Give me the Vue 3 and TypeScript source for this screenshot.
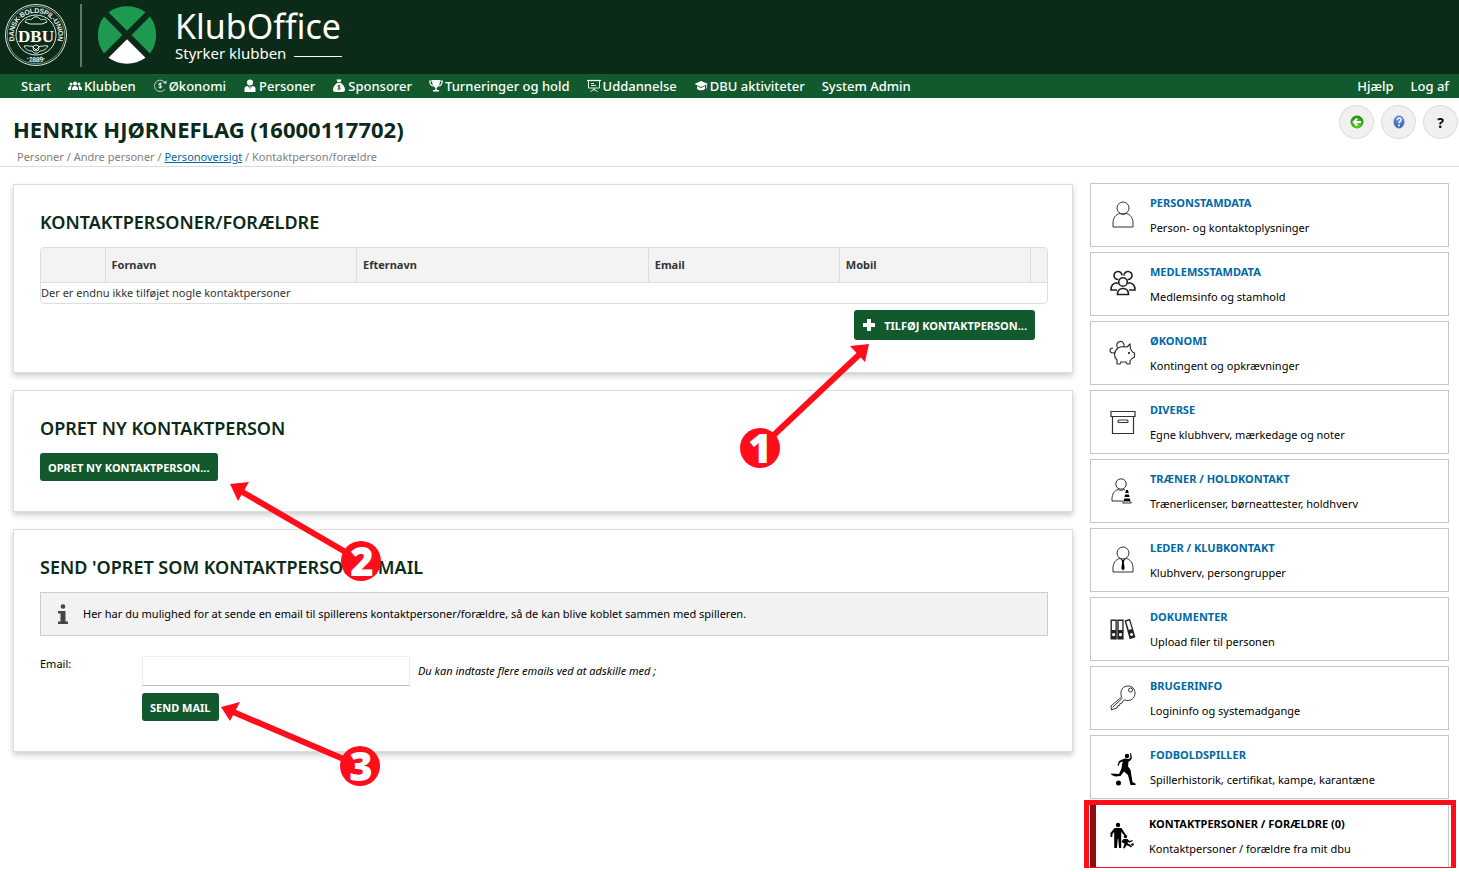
<script setup lang="ts">
import { ref } from 'vue'

interface NavItem { label: string; icon?: string }
interface SideItem { title: string; text: string; icon: string; active?: boolean }

const email = ref('')

const nav: NavItem[] = [
  { label: 'Start' },
  {
    label: 'Klubben',
    icon: '<circle cx="7" cy="4.500" r="2"/><path d="M4 11c0-3 1-4 3-4s3 1 3 4z"/><circle cx="3" cy="5" r="1.500"/><circle cx="11" cy="5" r="1.500"/><path d="M0 11c0-3 1-4 3-4l.6.300C3.200 8 3 9 3 11zM14 11c0-3-1-4-3-4l-.6.300c.4.700.6 1.700.6 3.700z"/>'
  },
  {
    label: 'Økonomi',
    icon: '<path d="M11 2.600A5.700 5.700 0 1 0 12 10" fill="none" stroke="currentColor" stroke-width=".9" opacity=".8"/><path d="M9.500 3.800 13.600 1.400 13.300 5z" opacity=".8"/><path d="M8.600 4.800C7.500 4 5.600 4.400 5.700 5.500c.1 1.300 3 .7 3 2.200 0 1.100-2.100 1.300-3.200.5M7.200 3.600v5.900" fill="none" stroke="currentColor" stroke-width="1"/>'
  },
  {
    label: 'Personer',
    icon: '<circle cx="7" cy="3.500" r="3"/><path d="M1.500 13V9.500C1.500 8 3 7 5 7l2 4 2-4c2 0 3.500 1 3.500 2.500V13z"/><path d="M6.500 7.200h1L7.700 10 7 11l-.7-1z"/>'
  },
  {
    label: 'Sponsorer',
    icon: '<path d="M4.500.5h5L8.500 3h-3zM5.300 3.700h3.400C11 5.300 13 8 13 10.500 13 12.300 12 13 10.500 13h-7C2 13 1 12.300 1 10.500 1 8 3 5.300 5.300 3.700z"/><path d="M8.500 7C7.500 6.200 5.800 6.500 5.900 7.500c.1 1 2.500.7 2.400 1.900 0 1-1.800 1.200-2.800.4M7 5.700v5.600" fill="none" stroke="#125a2d" stroke-width=".9"/>'
  },
  {
    label: 'Turneringer og hold',
    icon: '<path d="M3 1h8c0 4-1 7-3.300 7.700V11H10v1.500H4V11h2.300V8.700C4 8 3 5 3 1z"/><path d="M3 2H.8c0 3 1.200 4.600 3.400 5M11 2h2.200c0 3-1.200 4.600-3.400 5" fill="none" stroke="currentColor" stroke-width="1.200"/>'
  },
  {
    label: 'Uddannelse',
    icon: '<g fill="none" stroke="currentColor"><path d="M0 1.500h14" stroke-width="1.200"/><path d="M1.500 2v7h11V2M4 4.500h3M4 6.500h5M7 9v2M3.500 12.500 7 10.500l3.500 2" stroke-width=".9"/></g>'
  },
  {
    label: 'DBU aktiviteter',
    icon: '<path d="M7 2 14 5 7 8 .5 5z"/><path d="M3 7v2.700C4.500 11.700 9.500 11.700 11 9.700V7L7 8.900z"/><path d="M12.300 5.500h.8v4h-.8z"/>'
  },
  { label: 'System Admin' }
]

const side: SideItem[] = [
  {
    title: 'Personstamdata',
    text: 'Person- og kontaktoplysninger',
    icon: '<g fill="none" stroke="#333"><circle cx="14" cy="7" r="6"/><path d="M4 26V22c0-5 3-9 7-9.500 2 1 4 1 6 0 4 .5 7 4.500 7 9.500v4z"/></g>'
  },
  {
    title: 'Medlemsstamdata',
    text: 'Medlemsinfo og stamhold',
    icon: '<g fill="none" stroke="#222" stroke-width="1.600"><circle cx="14" cy="12" r="4.300"/><path d="M8.500 24.500c0-4 2-6 5.500-6s5.500 2 5.500 6zM9.500 9.500A4 4 0 1 1 13 5.500M18.500 9.500A4 4 0 1 0 15 5.500M8 12.800c-4 .2-6 2.700-6 7.200h6M20 12.800c4 .2 6 2.700 6 7.200h-6M8 12.800l1 1M20 12.800l-1 1"/></g>'
  },
  {
    title: 'Økonomi',
    text: 'Kontingent og opkrævninger',
    icon: '<g fill="none" stroke="#333" stroke-width="1.200" stroke-linejoin="round"><path d="M9 9c3-2 6-1.600 9-1l3-3 .5 5 2 3 2 1v4l-2.500 1.500-2 2.500v3h-3l-1-2h-5l-1 2H8v-4c-3-3-4-8 1-12zM4 14c-4 0-4-5 0-5M4 14l1.500-.5M8.500 8.500A3.700 3.700 0 1 1 15 7"/></g><circle cx="20" cy="14" r="1"/>'
  },
  {
    title: 'Diverse',
    text: 'Egne klubhverv, mærkedage og noter',
    icon: '<g fill="none" stroke="#333" stroke-width="1.200"><path d="M2 3.500h24v5H2zM3.500 8.500h21v17h-21z"/><rect x="9" y="12" width="10" height="2.500" rx="1"/></g>'
  },
  {
    title: 'Træner / Holdkontakt',
    text: 'Trænerlicenser, børneattester, holdhverv',
    icon: '<g fill="none" stroke="#333"><circle cx="12" cy="7" r="5.200"/><path d="M14 24H3v-2c0-5 2.500-8.500 6-9.500 2 1 4 1 6 0l1 .5"/><path d="M13.500 26h9l-2-2h-5z"/></g><path d="M17 13h2l.7 3h-3.400zM16 17.500h4l.5 2.500h-5zM15.200 21.500h5.600l.6 2.500h-6.800z"/>'
  },
  {
    title: 'Leder / Klubkontakt',
    text: 'Klubhverv, persongrupper',
    icon: '<g fill="none" stroke="#333"><circle cx="14" cy="7" r="6"/><path d="M4 26V22c0-5 3-9 7-9.500l3 2 3-2c4 .5 7 4.500 7 9.500v4z"/></g><path d="M12.500 14h3l-.7 2 .9 6.500L14 24.500l-1.700-2 .9-6.500z"/>'
  },
  {
    title: 'Dokumenter',
    text: 'Upload filer til personen',
    icon: '<g fill="#222" fill-rule="evenodd"><path d="M1.500 4.500h6.300v20H1.500zM2.900 6v9h3.600V6zM4.600 18a1.600 1.600 0 1 0 .1 0z"/><path d="M8.300 4.500h6.300v20H8.300zM9.700 6v9h3.600V6zM11.400 18a1.600 1.600 0 1 0 .1 0z"/><path d="M15.500 5.500l5.500-1.700 5.500 18.500-5.800 2zM17.200 6.500l2.600 8.500 3-1-2.600-8.600zM22.500 18a1.500 1.500 0 1 0 .1 0z"/></g>'
  },
  {
    title: 'Brugerinfo',
    text: 'Logininfo og systemadgange',
    icon: '<g fill="none" stroke="#333" stroke-linejoin="round"><path d="M12.500 13C10.500 6 14 2 19 2c4 0 7 3 7 7 0 5-4 9-10.500 7L14 17l-1 2-2 .5-.5 2-2 .5-.5 2-2 .5-3.500 1.500-.5-4z"/><circle cx="21.500" cy="6" r="2"/><path d="M13.500 14 3.500 23.500"/></g>'
  },
  {
    title: 'Fodboldspiller',
    text: 'Spillerhistorik, certifikat, kampe, karantæne',
    icon: '<circle cx="18" cy="3" r="2.200"/><path d="M15.500 5.500l4.500.5 1.500-1.500-.5-4 1-.5 1 5-2 3-1.500.5-.5 5c2 2 3 3.500 3 6.500l1.500 9 3 1.500v1.500h-5l-2.500-10-4-3.500-3.500 4.500-5 .5-4-1.500-.5-1.500 8 .5 2.500-5.500c.5-3 .5-5 1.500-7L11 9.500 9.500 13 8.500 12.500 10 8z"/><circle cx="9.500" cy="30" r="2.500"/>'
  },
  {
    title: 'Kontaktpersoner / Forældre (0)',
    text: 'Kontaktpersoner / forældre fra mit dbu',
    icon: '<circle cx="10" cy="3" r="2.200"/><path d="M6.500 6h7l2.500 4 2 3-1 1-3-3-.8-1.500V26H11l-.7-9h-.6L9 26H6.200V10L4.500 12 4.200 15H2.500V11z"/><circle cx="17.500" cy="14.500" r="1.700"/><path d="M15.500 17h4l2 2 3-1 .3 1-3.500 1.800-1.600-1v1.700l2.300 1 2 2-1 1-2.500-1.800-2-.5-2 3.300-1.300-.6 1.300-4.400-1.500-.5-1.500-1.500z"/><circle cx="24.500" cy="22.500" r="1.300"/>',
    active: true
  }
]
</script>

<template>
  <div class="page">
    <header class="brand">
      <svg class="crest" viewBox="0 0 64 64" role="img" aria-label="DBU">
        <g fill="none" stroke="#dfe8e1">
          <circle cx="32" cy="32" r="30.500" stroke-width="1" />
          <circle cx="32" cy="32" r="28.800" stroke-width=".5" />
          <circle cx="32" cy="32" r="20" stroke-width="1" />
          <path d="M21 19c2-5 5-1 7-3 2-3 6-3 8 0 2 2 5-2 7 3l-5 2H26zM20 43c4-1 6 1 8 0l4 4 4-4c2 1 4-1 8 0-2 4-6 5-8 5-2 3-6 3-8 0-3 0-6-1-8-5z" stroke-width="1" />
          <circle cx="32" cy="45" r="3" stroke-width="1" />
        </g>
        <path id="crest-top" d="M12.500 46.500A24.200 24.200 0 1 1 51.500 46.500" fill="none" />
        <path id="crest-bottom" d="M16 54A27 27 0 0 0 48 54" fill="none" />
        <text class="crest-ring" dy="2"><textPath href="#crest-top" startOffset="50%" text-anchor="middle">DANSK·BOLDSPIL-UNION</textPath></text>
        <text class="crest-ring"><textPath href="#crest-bottom" startOffset="50%" text-anchor="middle">·1889·</textPath></text>
        <text class="crest-mark" x="32" y="38.500" text-anchor="middle">DBU</text>
      </svg>
      <span class="divider"></span>
      <svg class="ball" viewBox="0 0 64 64" aria-hidden="true">
        <g fill="#1e9a50">
          <path d="M13.500 9.200A32 32 0 0 1 50.500 9.200L32 27.700z" />
          <path d="M9 13.500A31 31 0 0 0 9 50.500L27.500 32z" />
          <path d="M55 13.500A31 31 0 0 1 55 50.500L36.500 32z" />
        </g>
        <path d="M13.500 54.800A32 32 0 0 0 50.500 54.800L32 36.300z" fill="#fff" />
      </svg>
      <div class="wordmark">
        <span class="name">KlubOffice</span>
        <span class="slogan">Styrker klubben<i></i></span>
      </div>
    </header>

    <nav class="menu">
      <a v-for="item in nav" :key="item.label" href="#">
        <svg v-if="item.icon" viewBox="0 0 14 14" fill="currentColor" aria-hidden="true" v-html="item.icon"></svg>{{ item.label }}
      </a>
      <a class="push" href="#">Hjælp</a>
      <a href="#">Log af</a>
    </nav>

    <section class="heading">
      <div>
        <h1>HENRIK HJØRNEFLAG (16000117702)</h1>
        <p class="crumbs">Personer / Andre personer / <a href="#">Personoversigt</a> / Kontaktperson/forældre</p>
      </div>
      <div class="tools">
        <button type="button" aria-label="Tilbage">
          <svg viewBox="0 0 16 16">
            <defs>
              <radialGradient id="green" cx=".5" cy=".7" r=".6"><stop offset="0" stop-color="#6ee02c" /><stop offset="1" stop-color="#22920e" /></radialGradient>
              <radialGradient id="blue" cx=".5" cy=".4" r=".6"><stop offset="0" stop-color="#6f9be8" /><stop offset="1" stop-color="#2c55ad" /></radialGradient>
            </defs>
            <circle cx="8" cy="8" r="6.500" fill="url(#green)" />
            <path d="M12 8H5M8.200 4.500 4.700 8l3.500 3.500" fill="none" stroke="#fff" stroke-width="2" />
          </svg>
        </button>
        <button type="button" aria-label="Information">
          <svg viewBox="0 0 16 16">
            <ellipse cx="8" cy="8" rx="5.500" ry="6.500" fill="url(#blue)" stroke="#bcc8dc" />
            <path d="M6 6.200c0-3 4.500-2.700 4.200-.2C10 7.400 8 7.600 8 9.300" fill="none" stroke="#fff" stroke-width="1.500" />
            <circle cx="8" cy="11.500" r="1" fill="#fff" />
          </svg>
        </button>
        <button type="button">?</button>
      </div>
    </section>

    <main class="layout">
      <div class="cards">
        <section class="card">
          <h2>KONTAKTPERSONER/FORÆLDRE</h2>
          <div class="grid-frame">
            <table>
              <colgroup><col class="c-tool" /><col class="c-first" /><col class="c-last" /><col class="c-mail" /><col class="c-mail" /><col /></colgroup>
              <thead>
                <tr><th></th><th>Fornavn</th><th>Efternavn</th><th>Email</th><th>Mobil</th><th></th></tr>
              </thead>
              <tbody>
                <tr><td colspan="6">Der er endnu ikke tilføjet nogle kontaktpersoner</td></tr>
              </tbody>
            </table>
          </div>
          <div class="actions">
            <div class="anchor">
              <button class="btn add" type="button">
                <svg viewBox="0 0 14 14" aria-hidden="true"><path d="M5 1h4v4h4v4H9v4H5V9H1V5h4z" fill="#fff" /></svg>TILFØJ KONTAKTPERSON...
              </button>
              <svg class="note" width="1" height="1">
                <path d="M-94 138 9 41" />
                <path class="head" d="M15 34-4 36 11 52z" />
                <circle cx="-94" cy="138" r="20" />
                <text x="-94" y="153">1</text>
              </svg>
            </div>
          </div>
        </section>

        <section class="card">
          <h2>OPRET NY KONTAKTPERSON</h2>
          <div class="anchor">
            <button class="btn" type="button">OPRET NY KONTAKTPERSON...</button>
            <svg class="note" width="1" height="1">
              <path d="M321 108 199 37" />
              <path class="head" d="M190 31 209 29 198 48z" />
              <circle cx="321" cy="108" r="20" />
              <text x="322" y="123">2</text>
            </svg>
          </div>
        </section>

        <section class="card">
          <h2>SEND 'OPRET SOM KONTAKTPERSON'-EMAIL</h2>
          <p class="info">
            <svg viewBox="0 0 12 20" aria-hidden="true"><circle cx="6" cy="2.500" r="2.300" /><path d="M1 7h7.500v10.500H11V20H1v-2.500h2.500v-8H1z" /></svg>
            Her har du mulighed for at sende en email til spillerens kontaktpersoner/forældre, så de kan blive koblet sammen med spilleren.
          </p>
          <form class="mail" @submit.prevent>
            <label for="email">Email:</label>
            <div class="field">
              <input id="email" v-model="email" type="text" />
              <em>Du kan indtaste flere emails ved at adskille med ;</em>
            </div>
            <div class="anchor second">
              <button class="btn" type="submit">SEND MAIL</button>
              <svg class="note" width="1" height="1">
                <path d="M218 73 89 18" />
                <path class="head" d="M79 14 98 9 88 28z" />
                <circle cx="218" cy="73" r="20" />
                <text x="219" y="88">3</text>
              </svg>
            </div>
          </form>
        </section>
      </div>

      <aside class="side">
        <a v-for="item in side" :key="item.title" href="#" :class="{ active: item.active }">
          <svg viewBox="0 0 28 28" aria-hidden="true" v-html="item.icon"></svg>
          <span>
            <strong>{{ item.title.toUpperCase() }}</strong>
            <small>{{ item.text }}</small>
          </span>
        </a>
      </aside>
    </main>
  </div>
</template>

<style>
body {
  margin: 0;
  background: #fff;
}
</style>

<style scoped>
.page {
  font-family: "Noto Sans", "Open Sans", sans-serif;
  font-size: 11px;
  line-height: 16px;
  color: #000;
}
.page * {
  box-sizing: border-box;
}
.brand {
  display: flex;
  align-items: center;
  height: 74px;
  padding: 0 4px 4px;
  background: #0b2a17;
  color: #fff;
}
.crest {
  width: 64px;
  height: 64px;
}
.crest-ring {
  fill: #e6eee8;
  font: 700 7px "Liberation Sans", sans-serif;
}
.crest-mark {
  fill: #fff;
  font: 700 17px "Liberation Serif", serif;
}
.divider {
  width: 2px;
  height: 63px;
  margin: 0 13px 0 12px;
  background: #5f7767;
}
.ball {
  width: 64px;
  height: 64px;
}
.wordmark {
  display: flex;
  flex-direction: column;
  padding-left: 16px;
}
.name {
  font-size: 34px;
  line-height: 36px;
}
.slogan {
  display: flex;
  gap: 8px;
  font-size: 15px;
  line-height: 18px;
}
.slogan i {
  width: 48px;
  height: 13px;
  border-bottom: 1px solid #fff;
}
.menu {
  display: flex;
  align-items: center;
  height: 24px;
  padding: 0 10px 0 21px;
  gap: 17px;
  background: #125a2d;
  font-size: 13px;
  font-weight: 500;
}
.menu a {
  display: flex;
  align-items: center;
  gap: 2px;
  color: #fff;
  text-decoration: none;
  white-space: nowrap;
}
.menu svg {
  width: 14px;
  height: 14px;
}
.push {
  margin-left: auto;
}
.heading {
  display: flex;
  justify-content: space-between;
  height: 69px;
  padding: 7px 1px 0 13px;
  border-bottom: 1px solid #ddd;
}
h1 {
  margin: 8px 0;
  font-size: 22px;
  line-height: 32px;
  color: #0b2a17;
}
h1 + p {
  margin: -4px 0 0;
}
.crumbs {
  padding-left: 4px;
  color: #808080;
}
.crumbs a {
  color: #0068a5;
}
.tools {
  display: flex;
  gap: 7px;
}
.tools button {
  display: flex;
  align-items: center;
  justify-content: center;
  width: 35px;
  height: 34px;
  padding: 0;
  border: 1px solid #ddd;
  border-radius: 50%;
  background: #f0f0f0;
  font: 700 14px "Noto Sans", sans-serif;
  color: #000;
}
.tools svg {
  width: 16px;
  height: 16px;
}
.layout {
  display: grid;
  grid-template-columns: minmax(0, 1fr) 359px;
  gap: 17px;
  padding: 16px 10px 0 13px;
}
.cards {
  display: flex;
  flex-direction: column;
  gap: 17px;
  padding-top: 1px;
}
.card {
  padding: 26px 24px 30px 26px;
  border: 1px solid #ddd;
  background: #fff;
  box-shadow: 0 3px 6px rgba(0, 0, 0, 0.2);
}
h2 {
  margin: 0 0 14px;
  font-size: 18px;
  font-weight: 600;
  line-height: 22px;
  color: #0b2a17;
}
.grid-frame {
  overflow: hidden;
  border: 1px solid #ddd;
  border-radius: 4px;
}
table {
  width: 100%;
  table-layout: fixed;
  border-collapse: collapse;
  color: #333;
}
.c-tool {
  width: 64px;
}
.c-first {
  width: 25%;
}
.c-last {
  width: 29%;
}
.c-mail {
  width: 19%;
}
th {
  height: 34px;
  padding: 0 6px;
  border-right: 1px solid #ddd;
  border-bottom: 1px solid #ddd;
  background: #f3f3f3;
  text-align: left;
}
th:last-child {
  border-right: 0;
}
td {
  height: 21px;
  padding: 0;
}
.actions {
  display: flex;
  justify-content: flex-end;
  padding: 6px 13px 2px 0;
}
.anchor {
  position: relative;
  display: flex;
}
.btn {
  display: flex;
  align-items: center;
  height: 28px;
  padding: 0 8px;
  border: 0;
  border-radius: 3px;
  background: #125a2d;
  color: #fff;
  font: 700 11px "Noto Sans", sans-serif;
}
.add {
  height: 30px;
  gap: 8px;
}
.add svg {
  width: 14px;
  height: 14px;
}
.note {
  position: absolute;
  z-index: 2;
  top: 0;
  left: 0;
  overflow: visible;
  pointer-events: none;
}
.note path {
  fill: none;
  stroke: #ff0d1b;
  stroke-width: 6;
}
.note .head {
  fill: #ff0d1b;
  stroke-width: 0;
}
.note circle {
  fill: #ff0d1b;
}
.note text {
  fill: #fff;
  font: 800 40px "Open Sans", sans-serif;
  text-anchor: middle;
}
.info {
  display: flex;
  align-items: center;
  height: 44px;
  margin: 0 0 20px;
  padding: 0 16px;
  gap: 14px;
  border: 1px solid #ccc;
  background: #f2f2f2;
}
.info svg {
  width: 12px;
  height: 20px;
  fill: #444;
}
.mail {
  display: grid;
  grid-template-columns: 102px 1fr;
  row-gap: 7px;
}
.field {
  display: flex;
  align-items: center;
  gap: 8px;
}
.field input {
  width: 268px;
  height: 30px;
  padding: 0 8px;
  border: 1px solid #eee;
  border-bottom-color: #bbb;
  font: inherit;
}
.second {
  grid-column: 2;
}
.side {
  display: flex;
  flex-direction: column;
  gap: 5px;
}
.side a {
  position: relative;
  display: flex;
  align-items: center;
  height: 64px;
  padding-left: 18px;
  gap: 13px;
  border: 1px solid #c6c6c6;
  color: #000;
  text-decoration: none;
}
.side svg {
  width: 28px;
  height: 28px;
  overflow: visible;
}
.side span {
  display: flex;
  flex-direction: column;
  gap: 9px;
}
.side strong {
  color: #0068a5;
}
.side small {
  font-size: 11px;
}
.side .active {
  padding-left: 12px;
  border-left: 6px solid #900b0b;
}
.side .active::after {
  content: "";
  position: absolute;
  inset: -5px -8px -5px -12px;
  border: 5px solid #ff0d1b;
}
.side .active strong {
  color: #000;
}
</style>
